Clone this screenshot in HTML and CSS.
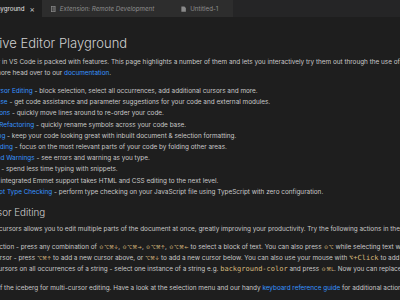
FILE: index.html
```html
<!DOCTYPE html>
<html lang="en">
<head>
    <meta charset="UTF-8">
    <title>Interactive Playground</title>
    <link rel="stylesheet" href="styles.css">
</head>
<body>
    <div class="tabs">
        <div class="tab active">Interactive Playground <span class="close">×</span></div>
        <div class="tab preview">
            <svg class="icon" viewBox="0 0 8 8"><rect x="0.5" y="0.5" width="5" height="7" fill="none" stroke="#8a8a8a"/><path d="M2 2.5h3M2 4h3M2 5.5h3" stroke="#8a8a8a"/></svg>
            Extension: Remote Development
        </div>
        <div class="tab">
            <svg class="icon" viewBox="0 0 8 8"><path d="M0.5 0.5h4l2 2v5h-6z" fill="#8a8a8a"/></svg>
            Untitled-1
        </div>
    </div>
    <div class="editor">
        <div class="page">
            <h1>Interactive Editor Playground</h1>
            <p>The core editor in VS Code is packed with features. This page highlights a number of them and lets you interactively try them out through the use of a number of embedded editors. For full details on the editor features for<br>VS Code and more head over to our <a href="#">documentation</a>.</p>
            <ul>
                <li><a href="#">Multi-cursor Editing</a> - block selection, select all occurrences, add additional cursors and more.</li>
                <li><a href="#">IntelliSense</a> - get code assistance and parameter suggestions for your code and external modules.</li>
                <li><a href="#">Line Actions</a> - quickly move lines around to re-order your code.</li>
                <li><a href="#">Rename Refactoring</a> - quickly rename symbols across your code base.</li>
                <li><a href="#">Formatting</a> - keep your code looking great with inbuilt document &amp; selection formatting.</li>
                <li><a href="#">Code Folding</a> - focus on the most relevant parts of your code by folding other areas.</li>
                <li><a href="#">Errors and Warnings</a> - see errors and warning as you type.</li>
                <li><a href="#">Snippets</a> - spend less time typing with snippets.</li>
                <li><a href="#">Emmet</a> - integrated Emmet support takes HTML and CSS editing to the next level.</li>
                <li><a href="#">JavaScript Type Checking</a> - perform type checking on your JavaScript file using TypeScript with zero configuration.</li>
            </ul>
            <h2>Multi-Cursor Editing</h2>
            <p>Using multiple cursors allows you to edit multiple parts of the document at once, greatly improving your productivity. Try the following actions in the code block below:</p>
            <ol>
                <li>Box Selection - press any combination of <kbd>⇧⌥⌘↓</kbd>, <kbd>⇧⌥⌘→</kbd>, <kbd>⇧⌥⌘↑</kbd>, <kbd>⇧⌥⌘←</kbd> to select a block of text. You can also press <kbd>⇧⌥</kbd> while selecting text with the mouse.</li>
                <li>Add a cursor - press <kbd>⌥⌘↑</kbd> to add a new cursor above, or <kbd>⌥⌘↓</kbd> to add a new cursor below. You can also use your mouse with <code>⌥+Click</code> to add a cursor anywhere.</li>
                <li>Create cursors on all occurrences of a string - select one instance of a string e.g. <code>background-color</code> and press <kbd>⇧⌘L</kbd>. Now you can replace all instances by simply typing.</li>
            </ol>
            <p>This is the tip of the iceberg for multi-cursor editing. Have a look at the selection menu and our handy <a href="#">keyboard reference guide</a> for additional actions.</p>
        </div>
    </div>
</body>
</html>
```

FILE: styles.css
```css
html, body {
    margin: 0;
    height: 100%;
    overflow: hidden;
}

body {
    background-color: #1e1e1e;
    color: #c8c8c8;
    font-family: Inter, "Open Sans", sans-serif;
}

.tabs {
    display: flex;
    height: 17px;
    background-color: #252526;
    margin-left: -51px;
}

.tab {
    display: flex;
    align-items: center;
    gap: 3px;
    padding: 0 15px 0 9px;
    background-color: #2d2d2d;
    color: #8d8d8d;
    font-size: 6.2px;
    white-space: nowrap;
}

.tab.active {
    background-color: #1e1e1e;
    color: #e6e6e6;
    padding: 0 7px 0 10px;
}

.tab.preview {
    font-style: italic;
    padding-right: 18px;
}

.close {
    margin-left: 2px;
    font-size: 8px;
    color: #c8c8c8;
}

.icon {
    width: 6px;
    height: 6px;
}

.editor {
    overflow: hidden;
}

.page {
    margin-left: -46px;
    width: 900px;
    white-space: nowrap;
    font-size: 6.4px;
    line-height: 11px;
}

h1 {
    margin: 17px 0 5px;
    font-size: 13px;
    font-weight: 300;
    line-height: 18px;
    color: #cfcfcf;
}

h2 {
    margin: 8px 0 4px;
    font-size: 9.8px;
    font-weight: 300;
    line-height: 14px;
    color: #cfcfcf;
}

p {
    margin: 0 0 7px;
}

ul, ol {
    margin: 0 0 7px;
    padding-left: 19px;
}

ol {
    list-style: disc;
}

li {
    line-height: 11.2px;
}

a {
    color: #3794ff;
    text-decoration: none;
}

kbd {
    font-family: Inter, sans-serif;
    font-size: 5px;
    color: #d7ba7d;
}

code {
    font-family: "DejaVu Sans Mono", monospace;
    font-size: 7px;
    color: #d7ba7d;
}
```
